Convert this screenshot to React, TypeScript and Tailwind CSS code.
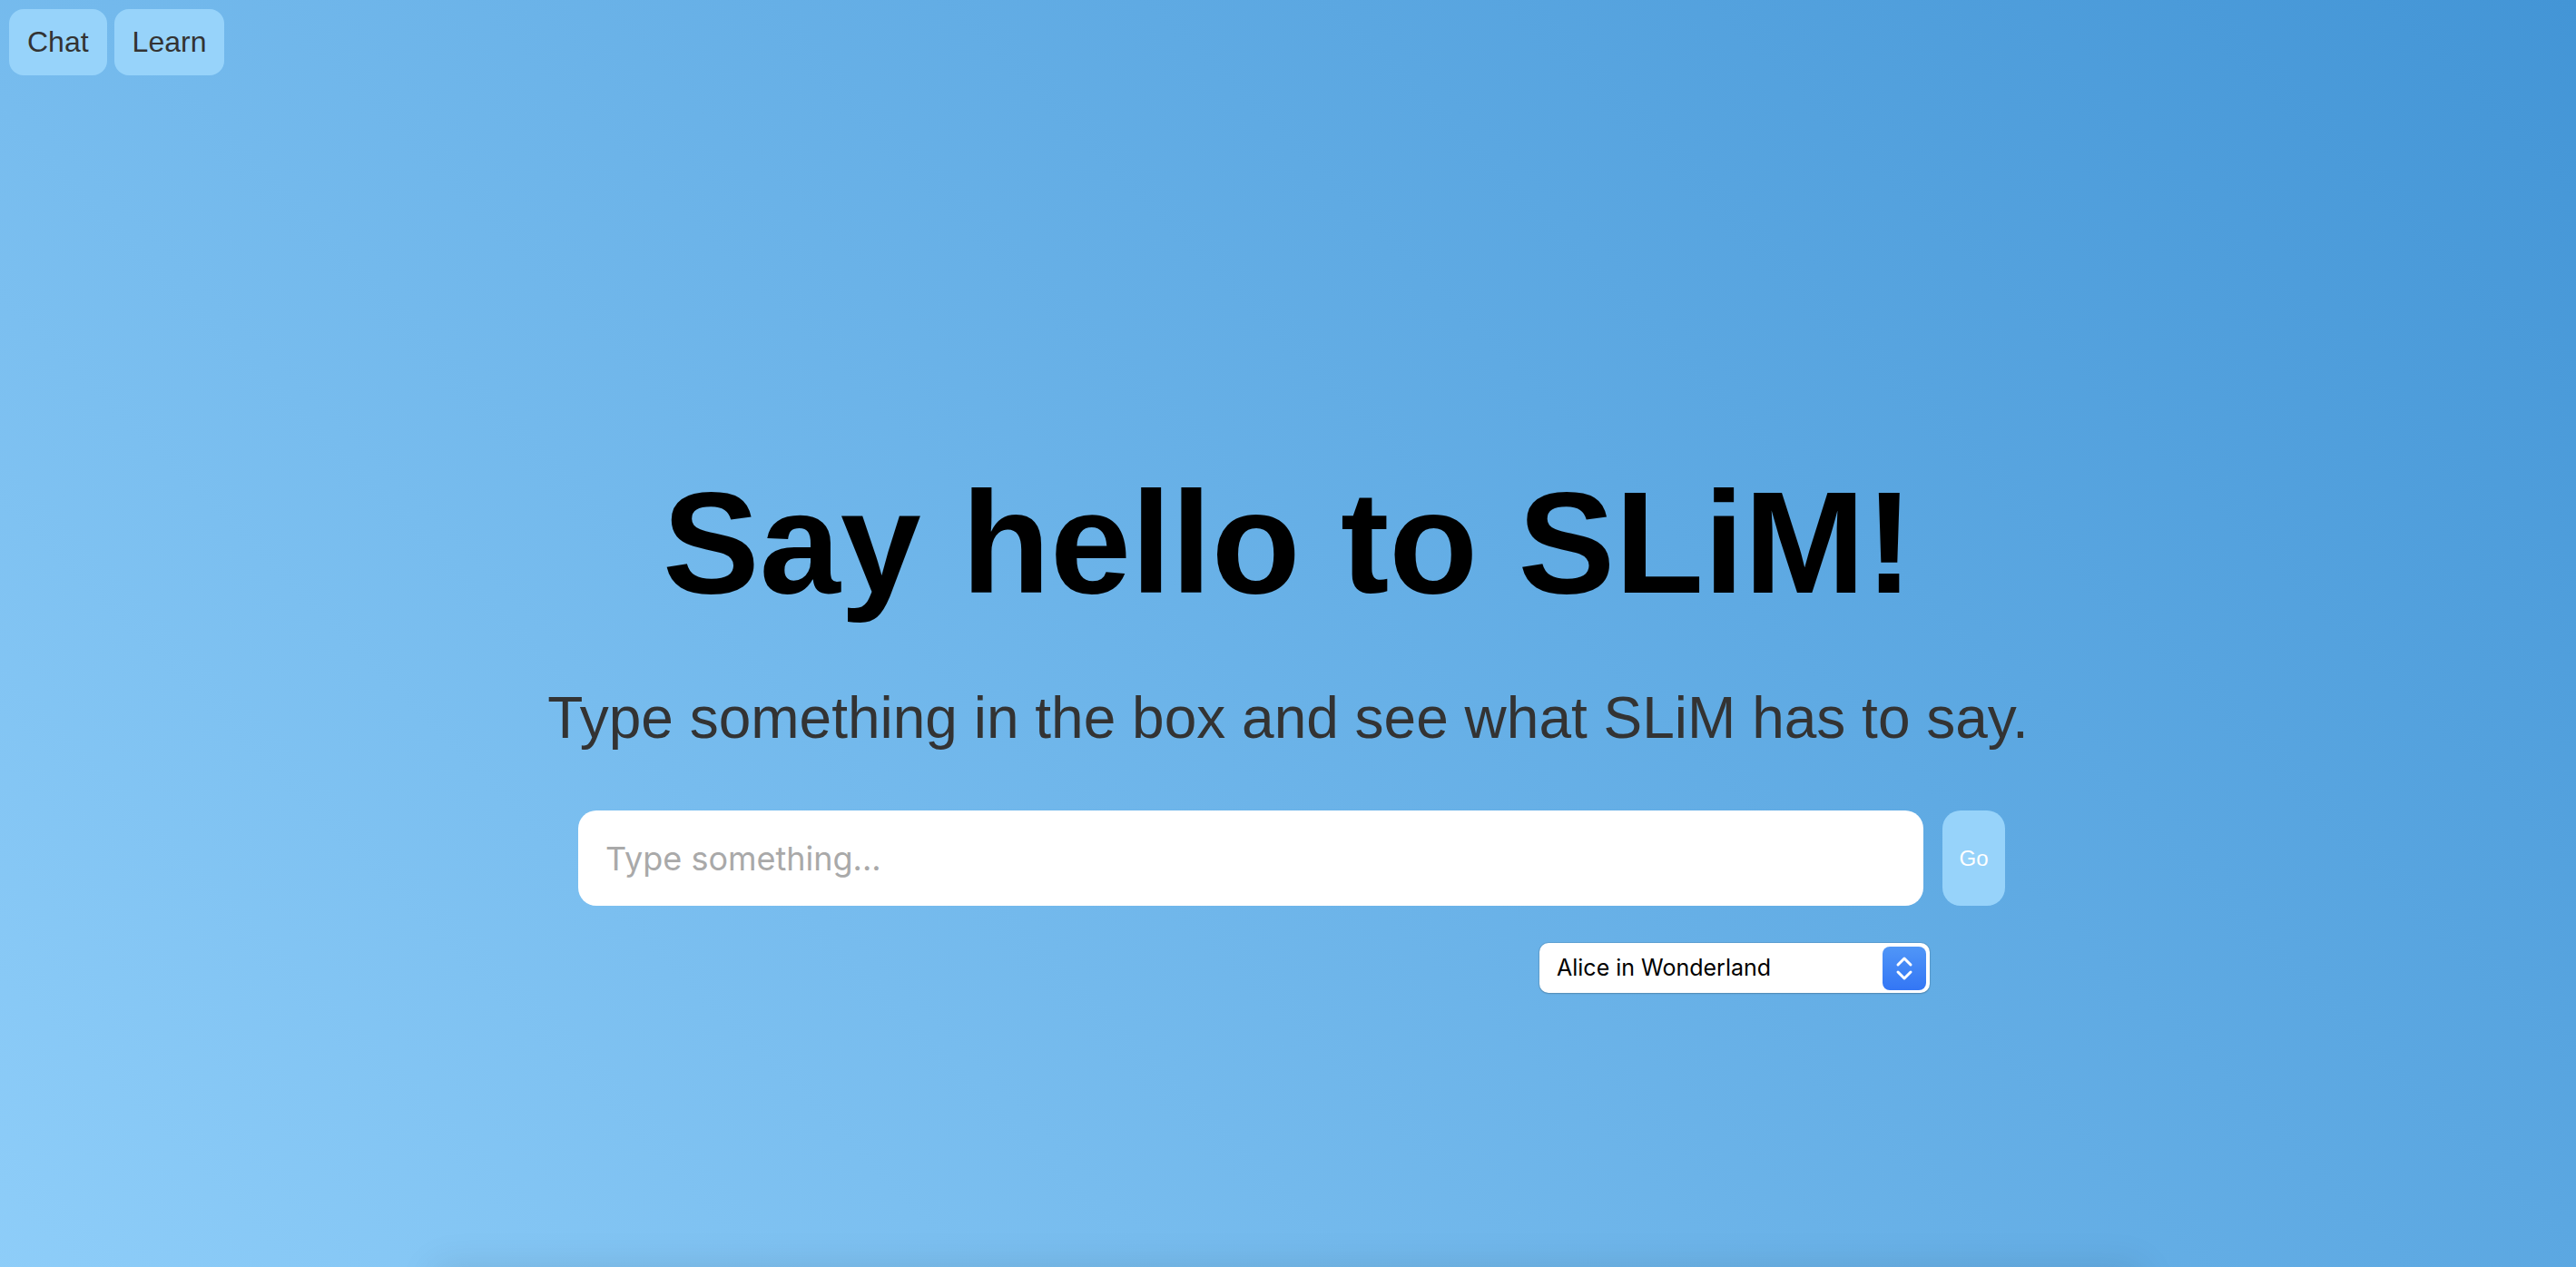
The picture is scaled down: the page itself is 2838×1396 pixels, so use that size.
import React from "react";

export default function App() {
  return (
    <div className="w-full bg-[linear-gradient(45deg,#93d1fb,#4395d6)] overflow-hidden">
      <div className="h-screen flex flex-col" style={{ fontFamily: '"Liberation Sans", Arial, sans-serif' }}>
        <nav className="flex gap-2 p-[10px]">
          <button className="h-[73px] px-5 rounded-2xl bg-[#97d3fa] text-[32px] leading-[37px] text-[#333]">
            Chat
          </button>
          <button className="h-[73px] px-5 rounded-2xl bg-[#97d3fa] text-[32px] leading-[37px] text-[#333]">
            Learn
          </button>
        </nav>
        <main className="flex flex-col items-center">
          <h1 className="mt-[425px] text-[160px] font-bold leading-none text-black">Say hello to SLiM!</h1>
          <p className="mt-[81px] text-[64px] leading-none text-[#333]">
            Type something in the box and see what SLiM has to say.
          </p>
          <div className="mt-[70px] ml-[8px] w-[1572px] flex flex-col">
            <div className="flex gap-[21px]">
              <input
                type="text"
                placeholder="Type something..."
                className="w-[1482px] h-[105px] rounded-[20px] bg-white pl-[30px] text-[36px] text-black outline-none placeholder:text-[#a9a9a9]"
                style={{ fontFamily: 'Inter, "Noto Sans", sans-serif' }}
              />
              <button className="w-[69px] h-[105px] rounded-[20px] bg-[#97d3fa] text-white text-[24px]">Go</button>
            </div>
            <div className="mt-[41px] flex justify-end pr-[83px]">
              <div
                className="w-[430px] h-[55px] rounded-[10px] bg-white flex items-center justify-between pl-[19px] pr-[4px] shadow-[0_0_0_1px_rgba(0,0,0,0.08),0_1px_2px_rgba(0,0,0,0.15)]"
                style={{ fontFamily: 'Inter, "Noto Sans", sans-serif' }}
              >
                <span className="text-[25px] text-black">Alice in Wonderland</span>
                <div className="w-[48px] h-[48px] rounded-[8px] bg-[linear-gradient(180deg,#5096f7,#3376f5)] flex items-center justify-center">
                  <svg width="20" height="30" viewBox="0 0 20 30" fill="none" stroke="white" strokeWidth="3" strokeLinecap="round" strokeLinejoin="round">
                    <path d="M3 11 L10 4 L17 11" />
                    <path d="M3 19 L10 26 L17 19" />
                  </svg>
                </div>
              </div>
            </div>
          </div>
        </main>
      </div>
      <div className="mx-auto w-[1880px] h-[300px] shadow-[0_0_40px_rgba(0,0,0,0.1)]" />
    </div>
  );
}
